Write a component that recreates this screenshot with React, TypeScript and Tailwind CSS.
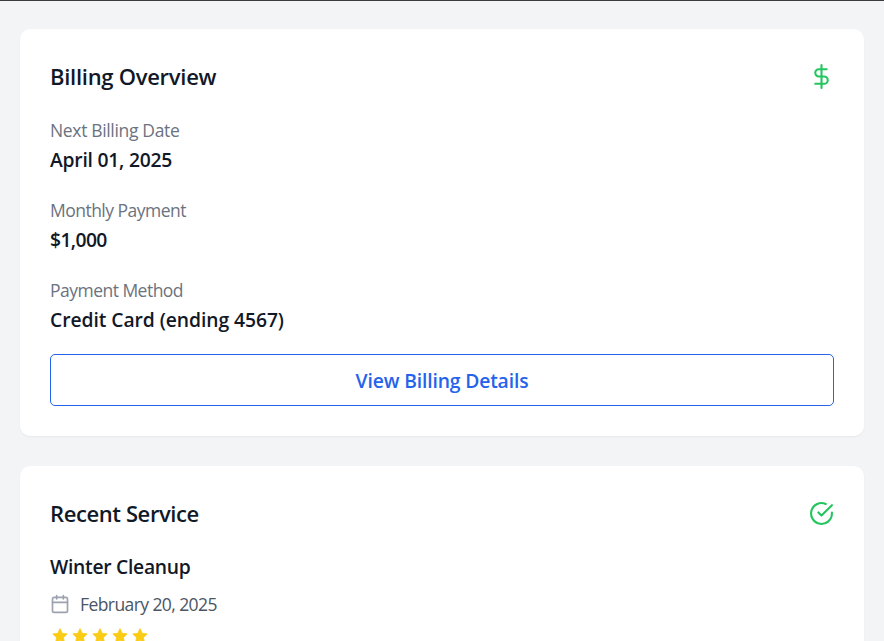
import { FiCalendar, FiCheckCircle, FiDollarSign } from "react-icons/fi";

const details = [
  { label: "Next Billing Date", value: "April 01, 2025", labelTracking: "tracking-[-0.34px]", valueTracking: "tracking-[-0.22px]" },
  { label: "Monthly Payment", value: "$1,000", labelTracking: "tracking-[-0.52px]", valueTracking: "tracking-[-0.6px]" },
  { label: "Payment Method", value: "Credit Card (ending 4567)", labelTracking: "tracking-[-0.52px]", valueTracking: "tracking-[-0.06px]" },
];

function Star() {
  return (
    <svg viewBox="0 0 20 20" className="size-5 fill-[#facc15]">
      <path
        d="M10 2.6l2.2 4.7 5 .6-3.7 3.6.9 5.1L10 14.2l-4.4 2.4.9-5.1-3.7-3.6 5-.6z"
        stroke="#facc15"
        strokeWidth="0.8"
        strokeLinejoin="round"
      />
    </svg>
  );
}

export default function App() {
  return (
    <div className="h-[641px] overflow-hidden border-t border-[#3b3b3b] bg-[#f3f4f6] px-5 pt-7 font-['Open_Sans',sans-serif] text-[#111827]">
      <section className="rounded-[10px] bg-white p-[30px] shadow-[0_1px_2px_rgba(0,0,0,0.05)]">
        <header className="mb-6 flex h-[35px] items-center justify-between">
          <h2 className="pb-px text-[22px] leading-[35px] font-semibold whitespace-nowrap"><span className="tracking-[-0.28px]">Billing Overview</span></h2>
          <FiDollarSign className="size-[25px] text-[#22c55e]" />
        </header>
        <dl className="flex flex-col gap-[23px]">
          {details.map((d) => (
            <div key={d.label}>
              <dt className="mb-0.5 text-[17.5px] leading-[25px] text-[#6b7280]"><span className={d.labelTracking}>{d.label}</span></dt>
              <dd className="text-[19.3px] leading-[30px] font-semibold"><span className={d.valueTracking}>{d.value}</span></dd>
            </div>
          ))}
        </dl>
        <button className="mt-[19px] flex h-[52px] w-full items-center justify-center rounded-[5px] border border-[#2563eb] pt-0.5 text-[19.3px] font-semibold text-[#2563eb]">
          <span className="tracking-[-0.14px]">View Billing Details</span>
        </button>
      </section>
      <section className="mt-[30px] h-[240px] rounded-[10px] bg-white p-[30px] shadow-[0_1px_2px_rgba(0,0,0,0.05)]">
        <header className="mb-[21px] flex h-[35px] items-center justify-between">
          <h2 className="pb-px text-[22px] leading-[35px] font-semibold"><span className="tracking-[-0.4px]">Recent Service</span></h2>
          <FiCheckCircle className="size-[25px] text-[#22c55e]" />
        </header>
        <h3 className="text-[19.3px] leading-[30px] font-semibold"><span className="tracking-[-0.27px]">Winter Cleanup</span></h3>
        <div className="mt-[9px] flex h-[25px] items-center gap-2.5">
          <FiCalendar className="size-5 text-[#9ca3af]" />
          <span className="pt-0.5 text-[17.5px] leading-[25px] tracking-[-0.58px] text-[#4b5563]">February 20, 2025</span>
        </div>
        <div className="mt-2.5 flex">
          <Star /><Star /><Star /><Star /><Star />
        </div>
      </section>
    </div>
  );
}
